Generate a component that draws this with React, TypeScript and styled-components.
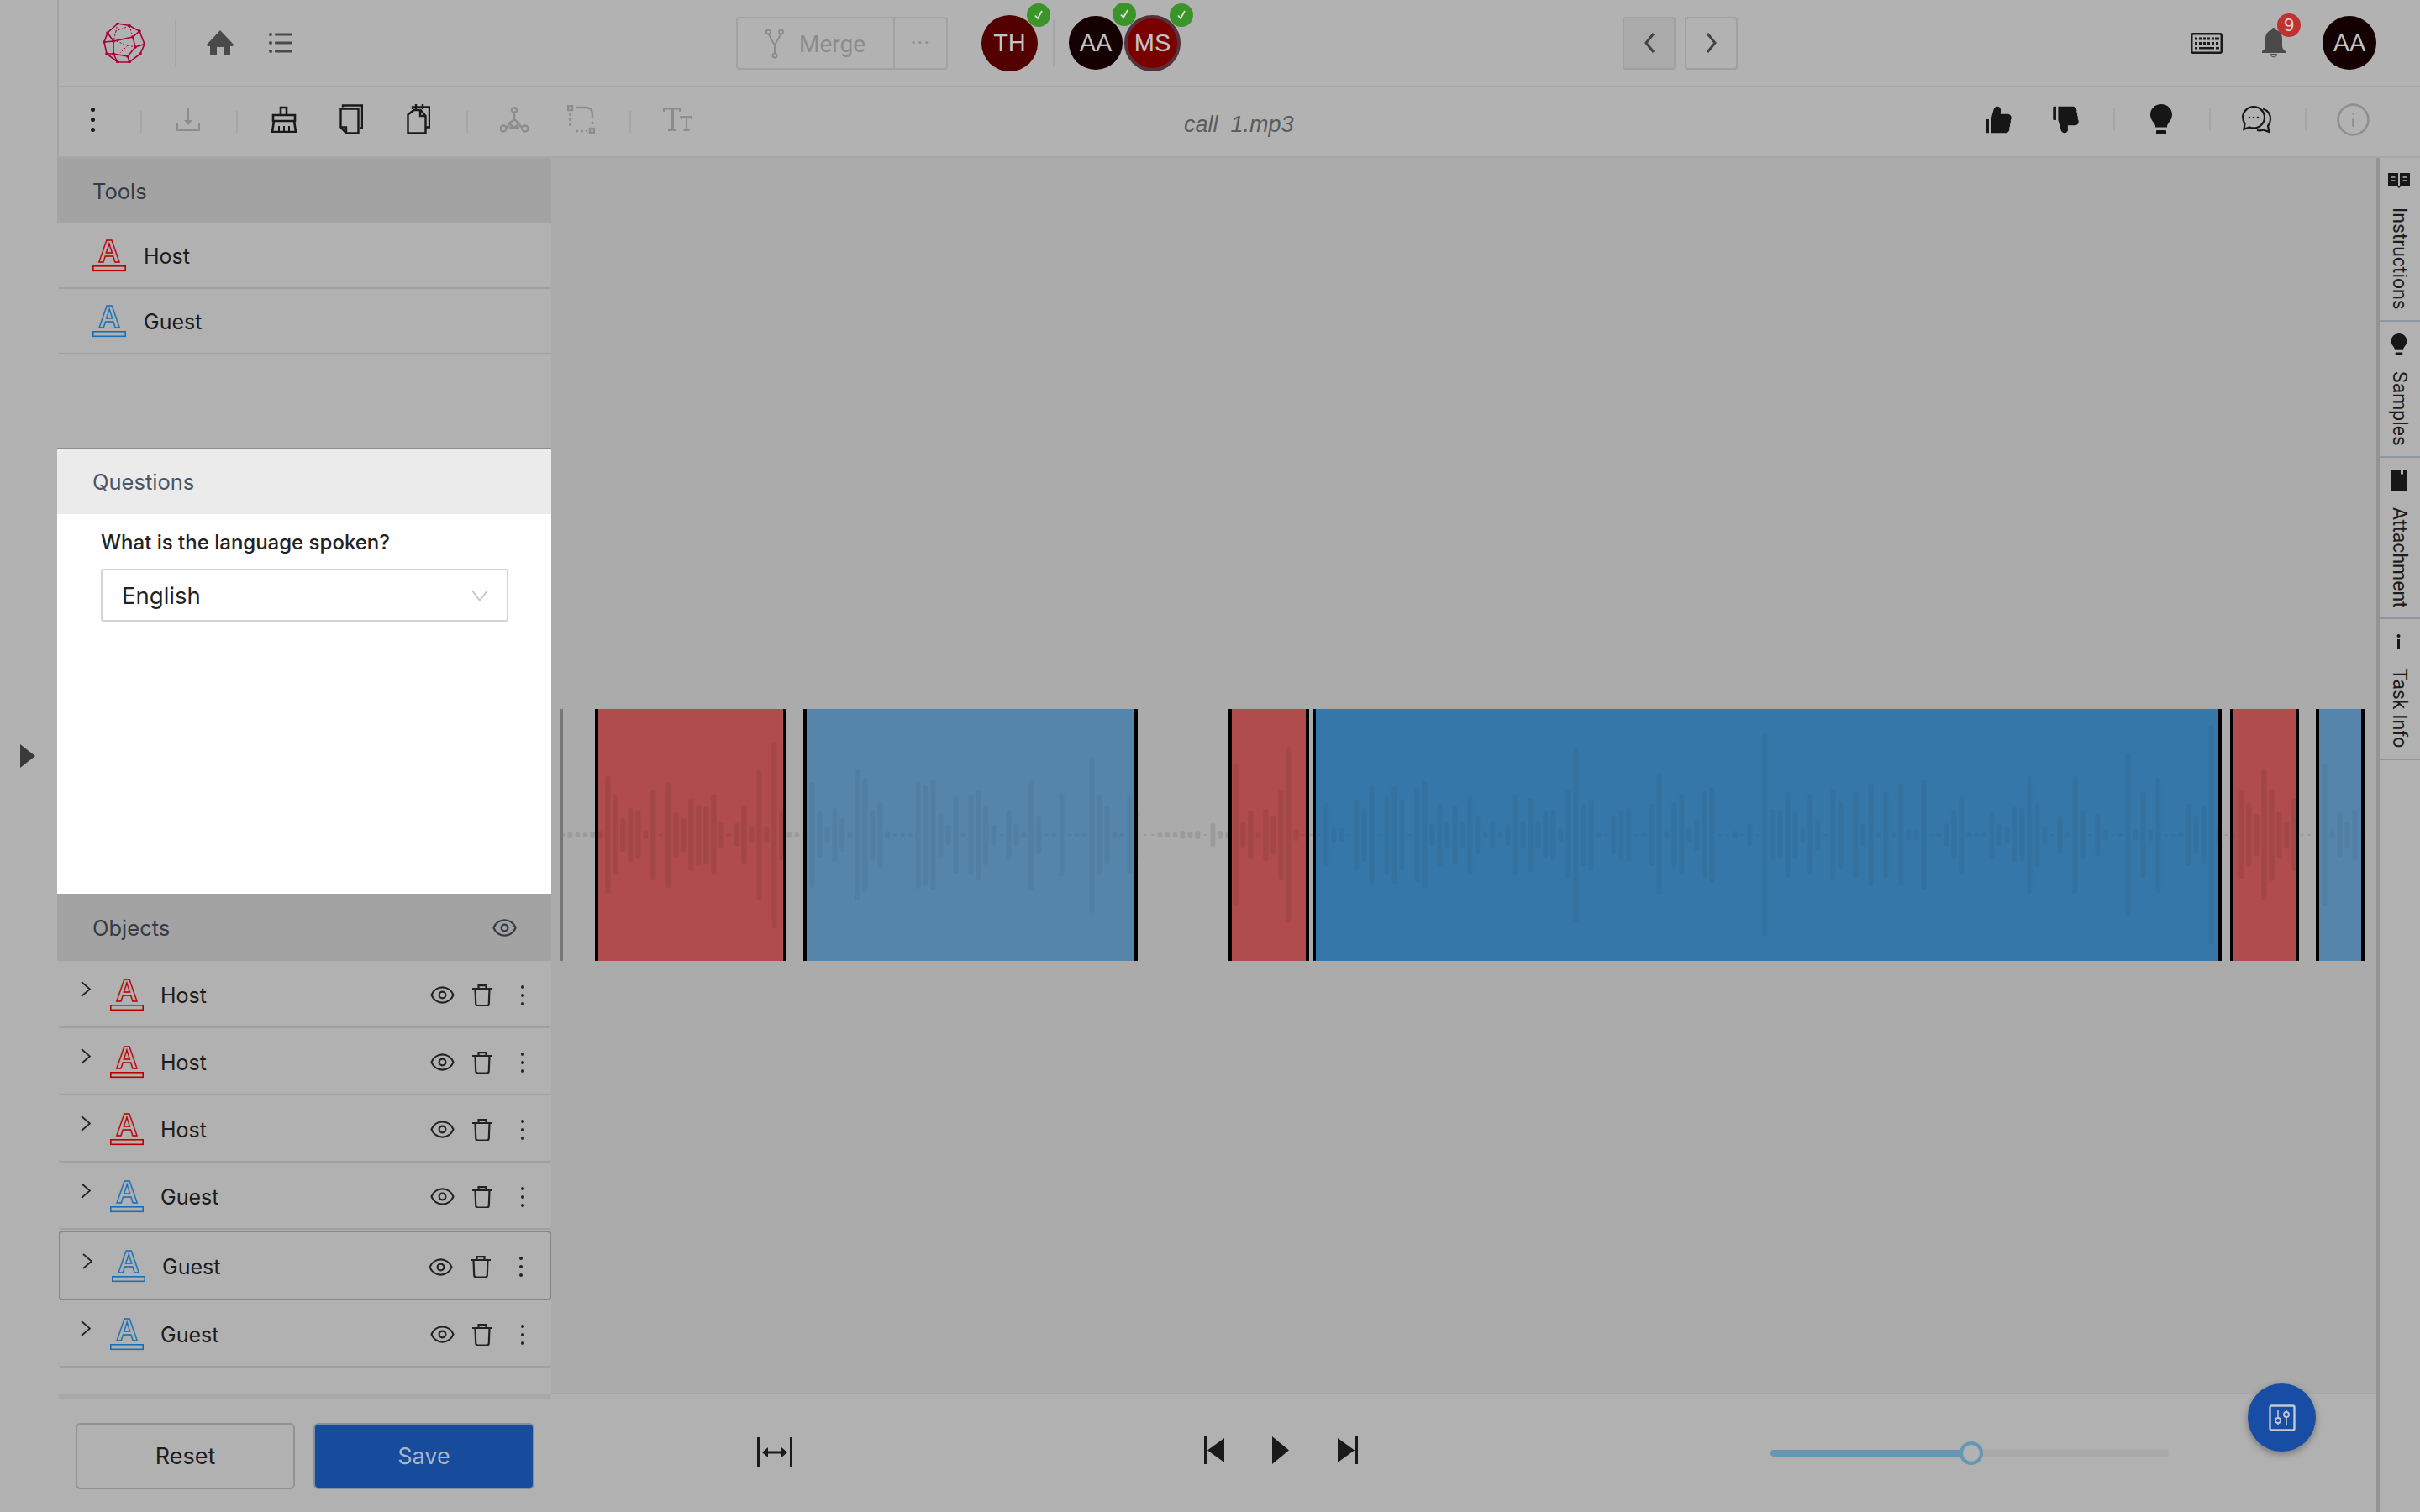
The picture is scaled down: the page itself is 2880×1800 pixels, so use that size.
import styled, { createGlobalStyle } from "styled-components";
import { AiFillLike, AiFillDislike } from "react-icons/ai";
import { Eye, Info } from "lucide-react";

const GlobalStyle = createGlobalStyle`
  html, body {
    margin: 0;
    padding: 0;
    width: 100%;
    height: 100%;
    overflow: hidden;
    background: #b2b2b2;
    font-family: "Inter", "Liberation Sans", sans-serif;
  }
  * { box-sizing: border-box; }
`;

const Page = styled.div`
  display: flex;
  width: 2880px;
  height: 1800px;
  background: #b2b2b2;
`;

const LeftRail = styled.div`
  width: 68px;
  flex-shrink: 0;
  display: flex;
  align-items: center;
  padding-left: 24px;
`;

const Main = styled.div`
  flex: 1;
  min-width: 0;
  display: flex;
  flex-direction: column;
`;

const TopBar = styled.header`
  height: 104px;
  flex-shrink: 0;
  display: flex;
  align-items: center;
  border-left: 2px solid #a3a3a3;
  border-bottom: 2px solid #a4a8ad;
`;

const ToolBar = styled.div`
  height: 84px;
  flex-shrink: 0;
  display: flex;
  align-items: center;
  border-left: 2px solid #a3a3a3;
  border-bottom: 2px solid #a4a8ad;
  padding-bottom: 6px;
`;

const Slot = styled.div<{ $ml?: number; $w: number; $h?: number; $up?: number }>`
  flex-shrink: 0;
  display: flex;
  align-items: center;
  justify-content: center;
  margin-left: ${({ $ml }) => $ml ?? 0}px;
  margin-bottom: ${({ $up }) => $up ?? 0}px;
  width: ${({ $w }) => $w}px;
  height: ${({ $h, $w }) => $h ?? $w}px;
  color: #1a1a1a;
  position: relative;

  svg {
    display: block;
    flex-shrink: 0;
  }
`;

const VSep = styled.div<{ $ml: number; $h: number; $mt?: number }>`
  flex-shrink: 0;
  width: 2px;
  height: ${({ $h }) => $h}px;
  margin-left: ${({ $ml }) => $ml}px;
  margin-top: ${({ $mt }) => $mt ?? 0}px;
  background: #a6a6a6;
`;

const MergeGroup = styled.div`
  margin-left: 528px;
  width: 252px;
  height: 63px;
  flex-shrink: 0;
  display: flex;
  border: 2px solid #a2a2a2;
  border-radius: 4px;
  color: #8b8b8b;
  font-family: "Roboto", sans-serif;
  font-size: 28px;
`;

const MergeMain = styled.div`
  width: 187px;
  display: flex;
  align-items: center;
  gap: 18px;
  padding: 2px 0 0 33px;
  border-right: 2px solid #a2a2a2;
`;

const MergeMore = styled.div`
  flex: 1;
  display: flex;
  justify-content: center;
  padding-top: 7px;
  font-size: 26px;
  line-height: 44px;
  letter-spacing: 1px;
`;

const Avatar = styled.div<{ $bg: string; $size: number; $ml: number; $ring?: boolean }>`
  position: relative;
  flex-shrink: 0;
  width: ${({ $size }) => $size}px;
  height: ${({ $size }) => $size}px;
  margin-left: ${({ $ml }) => $ml}px;
  border-radius: 50%;
  background: ${({ $bg }) => $bg};
  border: ${({ $ring }) => ($ring ? "4px solid #56303a" : "none")};
  display: flex;
  align-items: center;
  justify-content: center;
  color: #c4c4c4;
  font-family: "Liberation Sans", sans-serif;
  font-size: 29px;
`;

const CheckBadge = styled.span<{ $right: number; $top: number }>`
  position: absolute;
  right: ${({ $right }) => $right}px;
  top: ${({ $top }) => $top}px;
  width: 28px;
  height: 28px;
  border-radius: 50%;
  background: #3a9427;
  display: flex;
  align-items: center;
  justify-content: center;
`;

const NavButton = styled.div<{ $ml: number; $dim?: boolean }>`
  flex-shrink: 0;
  margin-left: ${({ $ml }) => $ml}px;
  width: 63px;
  height: 63px;
  border: 2px solid #a0a0a0;
  border-radius: 4px;
  background: ${({ $dim }) => ($dim ? "#aaaaaa" : "#b2b2b2")};
  display: flex;
  align-items: center;
  justify-content: center;
`;

const NotifyBadge = styled.span`
  position: absolute;
  left: 18px;
  top: -17px;
  width: 28px;
  height: 28px;
  border-radius: 50%;
  background: #c03232;
  color: #d8d8d8;
  font-family: "Liberation Sans", sans-serif;
  font-size: 22px;
  line-height: 28px;
  text-align: center;
`;

const Kebab = styled.div<{ $gap: number; $size: number; $c?: string }>`
  display: flex;
  flex-direction: column;
  align-items: center;
  gap: ${({ $gap }) => $gap}px;

  i {
    display: block;
    width: ${({ $size }) => $size}px;
    height: ${({ $size }) => $size}px;
    border-radius: 50%;
    background: ${({ $c }) => $c ?? "#1a1a1a"};
  }
`;

const FileName = styled.div`
  margin-left: 585px;
  margin-top: 12px;
  width: 132px;
  flex-shrink: 0;
  font-family: "Liberation Sans", sans-serif;
  font-style: italic;
  font-size: 27px;
  color: #5c5c5c;
  white-space: nowrap;
`;

const Body = styled.div`
  flex: 1;
  min-height: 0;
  display: flex;
`;

const SidePanel = styled.aside`
  width: 588px;
  flex-shrink: 0;
  display: flex;
  flex-direction: column;
`;

const ToolsSection = styled.section`
  height: 347px;
  flex-shrink: 0;
  background: #b1b1b1;
  border-bottom: 2px solid #8f8f8f;
`;

const SectionHead = styled.div<{ $light?: boolean; $h: number }>`
  height: ${({ $h }) => $h}px;
  display: flex;
  align-items: center;
  justify-content: space-between;
  padding: 0 40px 0 42px;
  background: ${({ $light }) => ($light ? "#ebebeb" : "#a3a3a3")};
  color: ${({ $light }) => ($light ? "#4a5568" : "#353c47")};
  font-size: 25.500px;
`;

const ToolRow = styled.div`
  height: 78px;
  margin-left: 2px;
  display: flex;
  align-items: center;
  gap: 21px;
  padding: 1px 0 0 40px;
  border-bottom: 2px solid #a0a0a0;
  color: #1c1c1c;
  font-size: 25px;
`;

const QuestionSection = styled.section`
  height: 529px;
  flex-shrink: 0;
  background: #fff;
`;

const QuestionBody = styled.div`
  padding: 19px 51px 0 52px;
`;

const QuestionLabel = styled.div`
  font-size: 24px;
  font-weight: 500;
  line-height: 29px;
  color: #222;
  white-space: nowrap;
`;

const SelectBox = styled.div`
  height: 63px;
  margin-top: 17px;
  display: flex;
  align-items: center;
  justify-content: space-between;
  padding: 0 22px 0 23px;
  border: 2px solid #d4d4d4;
  border-radius: 3px;
  font-size: 27.500px;
  color: #222;
`;

const ObjectsSection = styled.section`
  flex: 1;
  min-height: 0;
  display: flex;
  flex-direction: column;
  background: #b1b1b1;
`;

const ObjectList = styled.div`
  flex: 1;
  min-height: 0;
  overflow: hidden;
`;

const ObjectRow = styled.div<{ $selected?: boolean }>`
  height: ${({ $selected }) => ($selected ? 83 : 80)}px;
  margin-left: 2px;
  margin-top: ${({ $selected }) => ($selected ? 1 : 0)}px;
  display: flex;
  align-items: center;
  padding: 3px 30px 0 26px;
  font-size: 25px;
  color: #1c1c1c;
  border-radius: 0 0 4px 4px;
  border-bottom: 2px solid #a0a0a0;
  ${({ $selected }) =>
    $selected && "border: 2px solid #868686; border-radius: 4px;"}
`;

const RowName = styled.span`
  margin-left: 20px;
  margin-right: auto;
`;

const Footer = styled.div`
  height: 140px;
  flex-shrink: 0;
  margin-left: 2px;
  display: flex;
  gap: 22px;
  padding: 28px 20px 0 20px;
  border-top: 6px solid #a8a8a8;
  background: #b1b1b1;
`;

const FooterButton = styled.div<{ $primary?: boolean }>`
  width: ${({ $primary }) => ($primary ? 263 : 261)}px;
  height: 79px;
  display: flex;
  align-items: center;
  justify-content: center;
  border-radius: 6px;
  border: 2px solid ${({ $primary }) => ($primary ? "#7f8fa8" : "#929292")};
  background: ${({ $primary }) => ($primary ? "#174c9c" : "transparent")};
  color: ${({ $primary }) => ($primary ? "#a9b6cc" : "#1c1c1c")};
  font-size: 27px;
`;

const CenterColumn = styled.div`
  width: 2172px;
  flex-shrink: 0;
  display: flex;
  flex-direction: column;
`;

const Canvas = styled.div`
  flex: 1;
  min-height: 0;
  padding-top: 656px;
  background: #ababab;
`;

const BottomBar = styled.div`
  position: relative;
  height: 142px;
  flex-shrink: 0;
  display: flex;
  align-items: center;
  border-top: 2px solid #a3a6aa;
  background: #b1b1b1;
`;

const Slider = styled.div`
  position: relative;
  flex-shrink: 0;
  margin-left: 491px;
  width: 474px;
  height: 8px;
  border-radius: 4px;
  background: #a9a9a9;
`;

const SliderFill = styled.div`
  height: 100%;
  border-radius: 4px 0 0 4px;
  background: #6596b3;
`;

const SliderThumb = styled.div`
  position: absolute;
  top: -10px;
  width: 28px;
  height: 28px;
  margin-left: -14px;
  border-radius: 50%;
  background: #b2b2b2;
  border: 4px solid #6596b3;
`;

const Fab = styled.div`
  position: absolute;
  right: 72px;
  top: -13px;
  width: 81px;
  height: 81px;
  border-radius: 50%;
  background: #174da5;
  box-shadow: 0 3px 9px rgba(0, 0, 0, 0.35);
  display: flex;
  align-items: center;
  justify-content: center;
`;

const RightTabs = styled.nav`
  flex: 1;
  display: flex;
  flex-direction: column;
  border-left: 4px solid #949494;
  background: #b1b1b1;
`;

const SideTab = styled.div`
  display: flex;
  flex-direction: column;
  align-items: center;
  gap: 19px;
  padding: 14px 3px 12px 0;
  border-bottom: 2px solid #8f96a3;
  color: #1c1c1c;
`;

const TabIcon = styled.div`
  height: 26px;
  display: flex;
  align-items: center;
  justify-content: center;
`;

const TabText = styled.span`
  writing-mode: vertical-rl;
  font-family: "Roboto", sans-serif;
  font-size: 23px;
  line-height: 26px;
  white-space: nowrap;
`;

const GlyphSvg = styled.svg`
  display: block;
  flex-shrink: 0;
  margin: -10px 0 -2px;
`;

const Logo = () => {
  const outer = "16,0 30,2.5 42,9 48,24.5 43,36 30,46 16,46 3,36 0,22 4,11";
  const dots = [
    [16, 0], [30, 2.5], [42, 9], [48, 24.5], [43, 36], [30, 46], [16, 46], [3, 36], [0, 22], [4, 11],
    [11, 21], [34, 16], [37, 28], [28, 39], [11, 36],
  ];
  return (
    <svg width="50" height="48" viewBox="-1 -1 50 48" fill="none" stroke="#a8003a" strokeWidth="1.600">
      <polygon points={outer} />
      <path d="M4 11l7 10 23-5 8-7M34 16l3 12 11-3.500M37 28l-9 11-17-3 0-15M28 39l2 7M11 36l-8 0M11 36l5 10M0 22l11-1" />
      <path d="M16 0l-2 9 16-6M14 9l-3 12M30 3l4 13M28 26l9 2M28 26l-9 9M28 26l-14-5" strokeDasharray="2 2" strokeWidth="1" />
      {dots.map(([x, y]) => (
        <circle key={`${x}-${y}`} cx={x} cy={y} r="1.800" fill="#a8003a" stroke="none" />
      ))}
    </svg>
  );
};

const HomeIcon = () => (
  <svg width="32" height="30" viewBox="0 0 32 30" fill="#4a4a4a">
    <path d="M16 0l16 17c0 1.500-1 2-3 2h-1v11h-8v-10h-8v10h-8v-11h-1c-2 0-3-.5-3-2z" />
  </svg>
);

const ListIcon = () => (
  <svg width="28" height="26" viewBox="0 0 28 26" fill="#4a4a4a">
    <circle cx="2" cy="3" r="2" />
    <circle cx="2" cy="13" r="2" />
    <circle cx="2" cy="23" r="2" />
    <rect x="7" y="1.500" width="21" height="3" rx="1" />
    <rect x="7" y="11.500" width="21" height="3" rx="1" />
    <rect x="7" y="21.500" width="21" height="3" rx="1" />
  </svg>
);

const MergeIcon = () => (
  <svg width="22" height="36" viewBox="0 0 22 36" fill="none" stroke="#8b8b8b" strokeWidth="2">
    <circle cx="3.500" cy="4" r="2.500" />
    <circle cx="18.500" cy="4" r="2.500" />
    <circle cx="11" cy="32" r="2.500" />
    <path d="M4 7l7 13 7-13M11 20v9" />
  </svg>
);

const Chevron = ({ dir }: { dir: "left" | "right" }) => (
  <svg width="14" height="24" viewBox="0 0 14 24" fill="none" stroke="#444" strokeWidth="3">
    <path d={dir === "left" ? "M12 1L3 12l9 11" : "M2 1l9 11-9 11"} />
  </svg>
);

const TickMark = () => (
  <svg width="14" height="14" viewBox="0 0 14 14" fill="none" stroke="#d8e4d4" strokeWidth="1.800">
    <path d="M3 7.500l3 3.500 5-9" />
  </svg>
);

const KeyboardIcon = () => (
  <svg width="38" height="25" viewBox="0 0 38 25" fill="#1a1a1a">
    <path fillRule="evenodd" d="M3 0h32a3 3 0 0 1 3 3v19a3 3 0 0 1-3 3H3a3 3 0 0 1-3-3V3a3 3 0 0 1 3-3zm0 2.500a.5.5 0 0 0-.5.5v19a.5.5 0 0 0 .5.5h32a.5.5 0 0 0 .5-.5V3a.5.5 0 0 0-.5-.5z" />
    {[5, 10, 15, 20, 25].map((x) => (
      <rect key={x} x={x} y="5.500" width="3" height="3" />
    ))}
    <rect x="29" y="5.500" width="5" height="3" />
    {[5, 10, 15, 20, 25, 30].map((x) => (
      <rect key={x} x={x} y="11" width="3" height="3" />
    ))}
    <rect x="5" y="17" width="3" height="2.500" />
    <rect x="10" y="17" width="18" height="2.500" />
    <rect x="30" y="17" width="4" height="2.500" />
  </svg>
);

const BellIcon = () => (
  <svg width="28" height="36" viewBox="0 0 28 36" fill="#4a4a4a">
    <path d="M14 0c1.500 0 2.500 1 2.500 2.500C21.500 4 24 8 24 13v9c0 3 2 4.500 4 6v2H0v-2c2-1.500 4-3 4-6v-9C4 8 6.500 4 11.500 2.500 11.500 1 12.500 0 14 0z" />
    <path d="M10.500 31.500h7a3.500 3.500 0 0 1-7 0z" stroke="#4a4a4a" strokeWidth="1" fill="none" />
  </svg>
);

const DownloadIcon = () => (
  <svg width="28" height="28" viewBox="0 0 28 28" fill="none" stroke="#8c8c8c" strokeWidth="2">
    <path d="M14 0v17M1 18v9h26v-9" />
    <path d="M9 15h10l-5 6z" fill="#8c8c8c" stroke="none" />
  </svg>
);

const BroomIcon = () => (
  <svg width="30" height="32" viewBox="0 0 30 32" fill="none" stroke="#1a1a1a" strokeWidth="2.600">
    <path d="M11 11V2h7v9M2 11h26v7H2zM3 18l-2 13h28l-2-13" />
    <path d="M9 24v7M15 24v7M21 24v7" strokeWidth="2" />
  </svg>
);

const CopyIcon = () => (
  <svg width="28" height="36" viewBox="0 0 28 36" fill="none" stroke="#1a1a1a" strokeWidth="2.400">
    <path d="M4 3.500V1.500h23v27h-3" />
    <path d="M1.500 5.500h21v29H8l-6.500-7zM1.500 27.500H8v7" />
  </svg>
);

const PasteIcon = () => (
  <svg width="28" height="36" viewBox="0 0 28 36" fill="none" stroke="#1a1a1a" strokeWidth="2.400">
    <path d="M7 6V3.500h20v24h-4M11 0v6M19 0v6" />
    <path d="M1.500 12.500l7-5.500h8l6 7v20.500h-21zM16 7v7h6" />
  </svg>
);

const GraphIcon = () => (
  <svg width="34" height="31" viewBox="0 0 34 31" fill="none" stroke="#8c8c8c" strokeWidth="2.400">
    <circle cx="17" cy="4" r="3" />
    <circle cx="4" cy="26" r="3.500" />
    <circle cx="30" cy="26" r="3.500" />
    <path d="M17 7v8M17 15l-6 5 6 5 6-5zM11 22l-4 3M23 22l4 3M11 25h12" />
  </svg>
);

const DottedShapeIcon = () => (
  <svg width="33" height="34" viewBox="0 0 33 34" fill="none" stroke="#8c8c8c" strokeWidth="2.400">
    <rect x="1" y="1" width="5" height="5" />
    <rect x="27" y="28" width="5" height="5" />
    <path d="M10 3h12c6 0 8 3 8 9v4" />
    <path d="M3.500 10v18M10 31h14M30 20v6" strokeDasharray="3 3" />
  </svg>
);

const TextSizeIcon = () => (
  <svg width="35" height="28" viewBox="0 0 35 28" fill="#8c8c8c">
    <path d="M0 0h21v5h-2V2.500h-6V25.500h3V28H6v-2.500h3V2.500H2V5H0z" />
    <path d="M20 10h15v4h-2v-1.500h-4V25.500h2.500V28h-7v-2.500H27V12.500h-4V14h-2z" />
  </svg>
);

const BulbIcon = ({ w = 26, h = 36 }: { w?: number; h?: number }) => (
  <svg width={w} height={h} viewBox="0 0 26 36" fill="#161616">
    <path d="M13 0c7.200 0 13 5.500 13 12.500 0 5-3 8-5 11-1 1.500-1 3-1 4H6c0-1 0-2.500-1-4-2-3-5-6-5-11C0 5.500 5.800 0 13 0z" />
    <rect x="7" y="31" width="12" height="5" rx="1" />
  </svg>
);

const ChatIcon = () => (
  <svg width="36" height="33" viewBox="0 0 36 33" fill="none" stroke="#161616" strokeWidth="2.200">
    <path d="M25 3.500c6.500 2 9.500 7.500 9 13-.2 3-1.500 5.500-3 7.500l1.500 7-7-2.500c-2.500 1-5 1-7.500.5" />
    <path d="M14 1.200c7.200 0 13 5.500 13 12.600 0 7-5.800 12.600-13 12.600-2 0-3.500-.4-5-1l-6.500 2.400 1-6.500C2.200 19 1.100 16.500 1.100 13.800 1.100 6.700 6.800 1.200 14 1.200z" />
    <circle cx="9" cy="14" r="1.300" fill="#161616" stroke="none" />
    <circle cx="14" cy="14" r="1.300" fill="#161616" stroke="none" />
    <circle cx="19" cy="14" r="1.300" fill="#161616" stroke="none" />
  </svg>
);

const TrashIcon = () => (
  <svg width="24" height="26" viewBox="0 0 24 26" fill="none" stroke="#222" strokeWidth="2.200">
    <path d="M0 5h24M7.500 5V1.200h9V5M3.500 5l.7 18c0 1.500 1 2.500 2.500 2.500h10.600c1.500 0 2.500-1 2.500-2.500l.7-18" />
  </svg>
);

const LabelGlyph = ({ color }: { color: string }) => (
  <GlyphSvg width="40" height="48" viewBox="0 0 40 48">
    <text
      x="20"
      y="35"
      textAnchor="middle"
      fontFamily="Liberation Sans, sans-serif"
      fontWeight="700"
      fontSize="36"
      fill="none"
      stroke={color}
      strokeWidth="1.400"
    >
      A
    </text>
    <rect x="0.800" y="39.800" width="38.400" height="5.500" fill="none" stroke={color} strokeWidth="1.600" />
  </GlyphSvg>
);

const RowChevron = () => (
  <svg width="12" height="19" viewBox="0 0 12 19" fill="none" stroke="#222" strokeWidth="1.800">
    <path d="M1 1l10 8.500L1 18" />
  </svg>
);

const SelectCaret = () => (
  <svg width="20" height="14" viewBox="0 0 20 14" fill="none" stroke="#c4c4c4" strokeWidth="1.800">
    <path d="M1 1l9 12 9-12" />
  </svg>
);

const FitIcon = () => (
  <svg width="42" height="36" viewBox="0 0 42 36" fill="#1a1a1a">
    <rect x="0" y="0" width="3" height="36" />
    <rect x="39" y="0" width="3" height="36" />
    <path d="M6 18l7-6v4.500h16V12l7 6-7 6v-4.500H13V24z" />
  </svg>
);

const SkipIcon = ({ dir }: { dir: "back" | "next" }) => (
  <svg width="24" height="33" viewBox="0 0 24 33" fill="#1a1a1a">
    {dir === "back" ? (
      <>
        <rect x="0" y="0" width="3" height="33" />
        <path d="M24 2v29L4 16.500z" />
      </>
    ) : (
      <>
        <rect x="21" y="0" width="3" height="33" />
        <path d="M0 2v29l20-14.500z" />
      </>
    )}
  </svg>
);

const PlayIcon = () => (
  <svg width="20" height="33" viewBox="0 0 20 33" fill="#1a1a1a">
    <path d="M0 0v33l20-16.500z" />
  </svg>
);

const RailArrow = () => (
  <svg width="18" height="28" viewBox="0 0 18 28" fill="#3a3a3a">
    <path d="M0 0v28l18-14z" />
  </svg>
);

const MixerIcon = () => (
  <svg width="32" height="32" viewBox="0 0 32 32" fill="none" stroke="#c3c8d2" strokeWidth="2.400">
    <rect x="1.500" y="1.500" width="29" height="29" rx="2" />
    <path d="M11 7v18M21 7v18" strokeWidth="1.600" />
    <circle cx="11" cy="19" r="3" fill="#174da5" strokeWidth="1.800" />
    <circle cx="21" cy="12" r="3" fill="#174da5" strokeWidth="1.800" />
  </svg>
);

const BookIcon = () => (
  <svg width="26" height="18" viewBox="0 0 26 18" fill="#161616">
    <path d="M0 0h12v15H0zM14 0h12v15H14zM10 15h6l-3 3z" />
    <path d="M3.500 5h5M3.500 9h5M17.500 5h5M17.500 9h5" stroke="#b1b1b1" strokeWidth="1.400" />
  </svg>
);

const AttachIcon = () => (
  <svg width="20" height="26" viewBox="0 0 20 26" fill="#161616">
    <path d="M0 0h20v26H0z" />
    <path d="M12 1h3v5l-1.500-1.500L12 6z" fill="#b1b1b1" />
  </svg>
);

const TaskIcon = () => (
  <svg width="5" height="18" viewBox="0 0 5 18" fill="#161616">
    <circle cx="2.500" cy="2" r="2" />
    <rect x="1" y="6" width="3" height="12" />
  </svg>
);

// half heights of the bars, one every 9px from the left of the track
const PEAKS = [
  2, 4, 3, 3, 4, 5, 70, 47, 20, 32, 29, 5, 54, 1, 63, 27, 20, 43, 36, 34, 48, 16, 2, 14, 34, 10, 77, 9, 111, 30, 4, 3, 3,
  63, 28, 10, 32, 20, 4, 78, 68, 30, 40, 5, 2, 2, 2, 64, 59, 66, 26, 12, 46, 2, 48, 54, 36, 12, 1, 30, 13, 3, 65, 22, 1, 3, 49, 1, 2, 2, 93, 48, 34, 4, 2, 47, 28,
  1, 1, 3, 3, 3, 5, 4, 5, 1, 14, 5, 5, 85, 15, 29, 4, 31, 23, 54, 105, 7, 1, 1, 1,
  38, 9, 8, 1, 43, 32, 59, 1, 46, 58, 43, 1, 56, 64, 14, 37, 15, 35, 16, 46, 23, 4, 16, 4, 13, 48, 16, 44, 17, 28, 30, 8, 53, 104, 37, 43, 3, 1, 24, 30, 32, 1, 3, 37, 72, 5, 40, 48, 8, 19, 52, 57,
  1, 1, 5, 1, 14, 1, 121, 31, 29, 51, 28, 8, 48, 19, 1, 54, 41, 1, 52, 14, 61, 3, 52, 3, 61, 7, 7, 66, 1, 2, 14, 29, 46, 3, 2, 3, 28, 13, 10, 33, 32, 70, 38, 11, 1, 22, 3, 70, 29, 1, 25, 6, 1, 2, 98, 7, 51, 7, 69, 1, 1, 3, 37, 23, 35, 131, 10,
  1, 1, 53, 38, 25, 78, 55, 27, 16, 43, 1, 1, 1, 85, 5, 27, 16, 30, 1,
];

const RED = "#b04c4c";

const REGIONS = [
  { from: 708, to: 936, fill: RED },
  { from: 956, to: 1354, fill: "#5585ab" },
  { from: 1462, to: 1558, fill: RED },
  { from: 1562, to: 2644, fill: "#3577a8" },
  { from: 2654, to: 2736, fill: RED },
  { from: 2756, to: 2814, fill: "#5585ab" },
];

const ORIGIN = 656;

const barOpacity = (x: number) => {
  const region = REGIONS.find((r) => x + ORIGIN >= r.from && x + ORIGIN < r.to);
  if (!region) return 0.09;
  return region.fill === RED ? 0.08 : 0.045;
};

const Waveform = () => (
  <svg width="2172" height="300" viewBox="0 0 2172 300" style={{ display: "block" }}>
    {REGIONS.map((r) => (
      <rect key={r.from} x={r.from - ORIGIN} y="0" width={r.to - r.from} height="300" fill={r.fill} />
    ))}
    {PEAKS.map((h, i) => {
      const x = 10.4 + i * 9;
      return (
        <rect
          key={i}
          x={h < 2 ? x + 1 : x}
          y={150 - h}
          width={h < 2 ? 4 : 6}
          height={h * 2}
          rx={h < 2 ? 1 : 3}
          fill="#000"
          opacity={barOpacity(x + 3)}
        />
      );
    })}
    {REGIONS.map((r) => (
      <g key={r.from} fill="#000">
        <rect x={r.from - ORIGIN} y="0" width="4" height="300" />
        <rect x={r.to - ORIGIN - 4} y="0" width="4" height="300" />
      </g>
    ))}
    <rect x="10" y="0" width="4" height="300" fill="#777" />
  </svg>
);

const TOOLS = [
  { name: "Host", color: "#bb0000" },
  { name: "Guest", color: "#1570b8" },
];

const OBJECTS = [
  { name: "Host", color: "#bb0000" },
  { name: "Host", color: "#bb0000" },
  { name: "Host", color: "#bb0000" },
  { name: "Guest", color: "#1570b8" },
  { name: "Guest", color: "#1570b8", selected: true },
  { name: "Guest", color: "#1570b8" },
];

export default function App() {
  return (
    <Page>
      <GlobalStyle />
      <LeftRail>
        <RailArrow />
      </LeftRail>
      <Main>
        <TopBar>
          <Slot $ml={53} $w={50} $h={48}>
            <Logo />
          </Slot>
          <VSep $ml={35} $h={54} />
          <Slot $ml={36} $w={32} $h={30}>
            <HomeIcon />
          </Slot>
          <Slot $ml={42} $w={28} $h={26}>
            <ListIcon />
          </Slot>
          <MergeGroup>
            <MergeMain>
              <MergeIcon />
              Merge
            </MergeMain>
            <MergeMore>···</MergeMore>
          </MergeGroup>
          <Avatar $bg="#520000" $size={67} $ml={40}>
            TH
            <CheckBadge $right={-15} $top={-14}>
              <TickMark />
            </CheckBadge>
          </Avatar>
          <VSep $ml={18} $h={54} />
          <Avatar $bg="#140000" $size={64} $ml={17}>
            AA
            <CheckBadge $right={-16} $top={-16}>
              <TickMark />
            </CheckBadge>
          </Avatar>
          <Avatar $bg="#7a0000" $size={67} $ml={2} $ring>
            MS
            <CheckBadge $right={-19} $top={-18}>
              <TickMark />
            </CheckBadge>
          </Avatar>
          <NavButton $ml={526} $dim>
            <Chevron dir="left" />
          </NavButton>
          <NavButton $ml={11}>
            <Chevron dir="right" />
          </NavButton>
          <Slot $ml={539} $w={38} $h={25}>
            <KeyboardIcon />
          </Slot>
          <Slot $ml={47} $w={28} $h={36}>
            <BellIcon />
            <NotifyBadge>9</NotifyBadge>
          </Slot>
          <Avatar $bg="#140000" $size={64} $ml={44}>
            AA
          </Avatar>
        </TopBar>

        <ToolBar>
          <Slot $ml={36} $w={8} $h={30}>
            <Kebab $gap={7} $size={5}>
              <i />
              <i />
              <i />
            </Kebab>
          </Slot>
          <VSep $ml={53} $h={26} $mt={6} />
          <Slot $ml={41} $w={28}>
            <DownloadIcon />
          </Slot>
          <VSep $ml={43} $h={26} $mt={6} />
          <Slot $ml={40} $w={30} $h={32}>
            <BroomIcon />
          </Slot>
          <Slot $ml={51} $w={28} $h={36}>
            <CopyIcon />
          </Slot>
          <Slot $ml={52} $w={28} $h={36}>
            <PasteIcon />
          </Slot>
          <VSep $ml={43} $h={26} $mt={6} />
          <Slot $ml={38} $w={34} $h={31}>
            <GraphIcon />
          </Slot>
          <Slot $ml={46} $w={33} $h={34}>
            <DottedShapeIcon />
          </Slot>
          <VSep $ml={41} $h={26} $mt={6} />
          <Slot $ml={38} $w={35} $h={28}>
            <TextSizeIcon />
          </Slot>
          <FileName>call_1.mp3</FileName>
          <Slot $ml={821} $w={32} $h={36}>
            <AiFillLike size={39} color="#161616" />
          </Slot>
          <Slot $ml={48} $w={32} $h={36}>
            <AiFillDislike size={39} color="#161616" />
          </Slot>
          <VSep $ml={41} $h={26} />
          <Slot $ml={42} $w={26} $h={36}>
            <BulbIcon />
          </Slot>
          <VSep $ml={44} $h={26} />
          <Slot $ml={37} $w={36} $h={33}>
            <ChatIcon />
          </Slot>
          <VSep $ml={39} $h={26} />
          <Slot $ml={37} $w={36} $h={36}>
            <Info size={43} color="#8f8f8f" strokeWidth={1.500} />
          </Slot>
        </ToolBar>

        <Body>
          <SidePanel>
            <ToolsSection>
              <SectionHead $h={78}>Tools</SectionHead>
              {TOOLS.map((t) => (
                <ToolRow key={t.name}>
                  <LabelGlyph color={t.color} />
                  {t.name}
                </ToolRow>
              ))}
            </ToolsSection>

            <QuestionSection>
              <SectionHead $light $h={77}>Questions</SectionHead>
              <QuestionBody>
                <QuestionLabel>What is the language spoken?</QuestionLabel>
                <SelectBox>
                  English
                  <SelectCaret />
                </SelectBox>
              </QuestionBody>
            </QuestionSection>

            <ObjectsSection>
              <SectionHead $h={80}>
                Objects
                <Eye size={31} color="#353c47" strokeWidth={1.800} />
              </SectionHead>
              <ObjectList>
                {OBJECTS.map((o, i) => (
                  <ObjectRow key={i} $selected={o.selected}>
                    <Slot $w={12} $h={19} $up={14}>
                      <RowChevron />
                    </Slot>
                    <Slot $ml={23} $w={40} $h={36}>
                      <LabelGlyph color={o.color} />
                    </Slot>
                    <RowName>{o.name}</RowName>
                    <Slot $w={26} $h={26}>
                      <Eye size={31} color="#222" strokeWidth={1.700} />
                    </Slot>
                    <Slot $ml={23} $w={24} $h={26}>
                      <TrashIcon />
                    </Slot>
                    <Slot $ml={32} $w={8} $h={26}>
                      <Kebab $gap={6} $size={4} $c="#222">
                        <i />
                        <i />
                        <i />
                      </Kebab>
                    </Slot>
                  </ObjectRow>
                ))}
              </ObjectList>
              <Footer>
                <FooterButton>Reset</FooterButton>
                <FooterButton $primary>Save</FooterButton>
              </Footer>
            </ObjectsSection>
          </SidePanel>

          <CenterColumn>
            <Canvas>
              <Waveform />
            </Canvas>
            <BottomBar>
              <Slot $ml={245} $w={42} $h={36} $up={2}>
                <FitIcon />
              </Slot>
              <Slot $ml={490} $w={24} $h={33} $up={7}>
                <SkipIcon dir="back" />
              </Slot>
              <Slot $ml={57} $w={20} $h={33} $up={7}>
                <PlayIcon />
              </Slot>
              <Slot $ml={58} $w={24} $h={33} $up={7}>
                <SkipIcon dir="next" />
              </Slot>
              <Slider>
                <SliderFill style={{ width: "50.5%" }} />
                <SliderThumb style={{ left: "50.5%" }} />
              </Slider>
              <Fab>
                <MixerIcon />
              </Fab>
            </BottomBar>
          </CenterColumn>

          <RightTabs>
            <SideTab>
              <TabIcon>
                <BookIcon />
              </TabIcon>
              <TabText>Instructions</TabText>
            </SideTab>
            <SideTab>
              <TabIcon>
                <BulbIcon w={20} h={26} />
              </TabIcon>
              <TabText>Samples</TabText>
            </SideTab>
            <SideTab>
              <TabIcon>
                <AttachIcon />
              </TabIcon>
              <TabText>Attachment</TabText>
            </SideTab>
            <SideTab>
              <TabIcon>
                <TaskIcon />
              </TabIcon>
              <TabText>Task Info</TabText>
            </SideTab>
          </RightTabs>
        </Body>
      </Main>
    </Page>
  );
}
